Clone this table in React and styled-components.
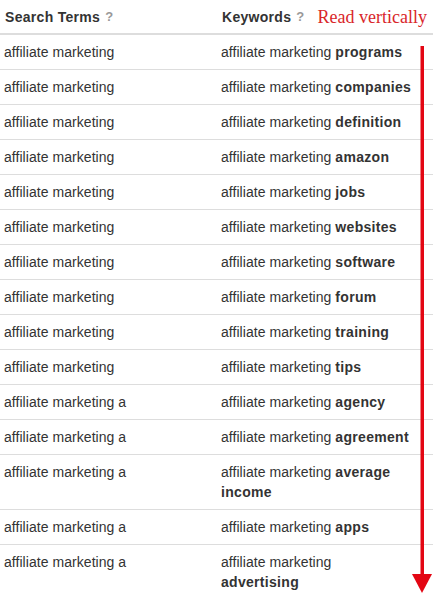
import React from "react";
import styled, { createGlobalStyle } from "styled-components";

const GlobalStyle = createGlobalStyle`
  html, body {
    margin: 0;
    padding: 0;
    background: #fff;
  }
  body {
    font-family: "Liberation Sans", Arial, sans-serif;
    color: #333;
    overflow: hidden;
  }
`;

const Table = styled.div`
  position: relative;
  width: 433px;
`;

const Row = styled.div`
  display: grid;
  grid-template-columns: 217px 1fr;
  border-bottom: ${(p) => (p.$head ? "2px solid #ddd" : "1px solid #ddd")};
`;

const Cell = styled.div`
  padding: ${(p) => (p.$head ? "7px 4px 6px 5px" : "7px 4px")};
  font-size: 14px;
  line-height: 20px;
  letter-spacing: 0.05px;
  color: #333;
`;

const KeywordCell = styled(Cell)`
  padding-right: 21px;
`;

const HeadCell = styled(Cell)`
  display: flex;
  align-items: center;
  font-weight: 700;
  letter-spacing: 0.3px;
  color: #333;
`;

const Help = styled.span`
  color: #999;
  margin-left: 5px;
  font-size: 13px;
`;

const Note = styled.span`
  font-family: "Liberation Serif", "Times New Roman", serif;
  font-weight: 400;
  font-size: 18px;
  letter-spacing: 0;
  color: #d9262a;
  margin-left: 13px;
  line-height: 20px;
`;

const Strong = styled.b`
  font-weight: 700;
  letter-spacing: 0.3px;
`;

const Arrow = styled.svg`
  position: absolute;
  left: 411px;
  top: 46px;
`;

const rows = [
  ["affiliate marketing", "programs"],
  ["affiliate marketing", "companies"],
  ["affiliate marketing", "definition"],
  ["affiliate marketing", "amazon"],
  ["affiliate marketing", "jobs"],
  ["affiliate marketing", "websites"],
  ["affiliate marketing", "software"],
  ["affiliate marketing", "forum"],
  ["affiliate marketing", "training"],
  ["affiliate marketing", "tips"],
  ["affiliate marketing a", "agency"],
  ["affiliate marketing a", "agreement"],
  ["affiliate marketing a", "average income"],
  ["affiliate marketing a", "apps"],
  ["affiliate marketing a", "advertising"],
];

export default function App() {
  return (
    <>
      <GlobalStyle />
      <Table>
        <Row $head>
          <HeadCell $head>
            Search Terms<Help>?</Help>
          </HeadCell>
          <HeadCell $head>
            Keywords<Help>?</Help>
            <Note>Read vertically</Note>
          </HeadCell>
        </Row>
        {rows.map(([term, word], i) => (
          <Row key={i}>
            <Cell>{term}</Cell>
            <KeywordCell>
              affiliate marketing <Strong>{word}</Strong>
            </KeywordCell>
          </Row>
        ))}
        <Arrow width="22" height="548" viewBox="0 0 22 548">
          <rect x="9.5" y="0" width="3.5" height="530" fill="#e30613" />
          <polygon points="1,528 21,528 11,547" fill="#e30613" />
        </Arrow>
      </Table>
    </>
  );
}
